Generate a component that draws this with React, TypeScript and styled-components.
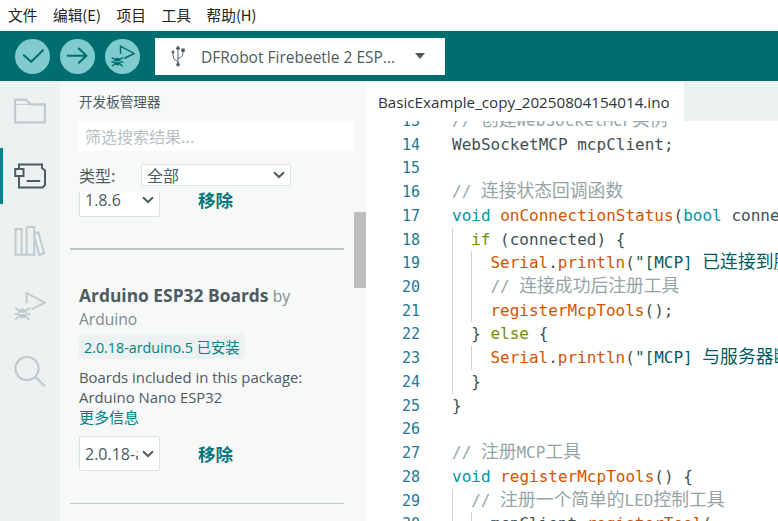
import React from "react";
import styled, { createGlobalStyle } from "styled-components";

const Global = createGlobalStyle`
  html, body { margin: 0; padding: 0; width: 778px; height: 521px; overflow: hidden; background: #fff; }
  * { box-sizing: border-box; }
`;

const Shell = styled.div`
  width: 778px;
  height: 521px;
  display: flex;
  flex-direction: column;
  overflow: hidden;
  font-family: "Open Sans", "Noto Sans CJK SC", sans-serif;
  color: #4e5b61;
`;

const MenuBar = styled.div`
  height: 31px;
  flex: none;
  display: flex;
  align-items: center;
  gap: 15.6px;
  padding: 0 0 2px 8px;
  background: #fff;
  font-family: "Noto Sans CJK SC", sans-serif;
  font-size: 14.7px;
  color: #222;
`;

const MenuItem = styled.span``;

const Toolbar = styled.div`
  height: 50px;
  flex: none;
  display: flex;
  align-items: center;
  gap: 10px;
  padding-left: 15px;
  background: #006d70;
`;

const RoundButton = styled.div`
  width: 35px;
  height: 35px;
  border-radius: 50%;
  background: #7fcbcd;
  display: flex;
  align-items: center;
  justify-content: center;
  flex: none;
`;

const BoardSelect = styled.div`
  width: 290px;
  height: 37px;
  margin-left: 5px;
  background: #fff;
  display: flex;
  align-items: center;
  padding-left: 15px;
  font-size: 15.5px;
  color: #4e5b61;
`;

const BoardName = styled.span`
  margin: 2px 0 0 15px;
  width: 214px;
  white-space: nowrap;
`;

const Caret = styled.span`
  width: 0;
  height: 0;
  border-left: 5px solid transparent;
  border-right: 5px solid transparent;
  border-top: 6px solid #4e5b61;
`;

const Body = styled.div`
  flex: 1;
  display: flex;
  min-height: 0;
`;

const ActivityBar = styled.div`
  width: 60px;
  flex: none;
  background: #ecf1f1;
  display: flex;
  flex-direction: column;
  gap: 9px;
  padding-top: 2px;
`;

const ActivityItem = styled.div<{ $active?: boolean }>`
  height: 56px;
  display: flex;
  align-items: center;
  justify-content: center;
  border-left: 3px solid ${(p) => (p.$active ? "#008184" : "transparent")};
  padding-right: 3px;
`;

const Panel = styled.div`
  width: 306px;
  flex: none;
  background: #f7f9f9;
  position: relative;
  overflow: hidden;
  display: flex;
  flex-direction: column;
`;

const PanelTitle = styled.div`
  height: 40px;
  flex: none;
  padding: 12px 0 0 19px;
  font-family: "Noto Sans CJK SC", sans-serif;
  font-size: 13.6px;
  line-height: 16px;
  color: #4e5b61;
`;

const Search = styled.div`
  height: 30px;
  margin: 0 12px 0 19px;
  flex: none;
  background: #fff;
  border-radius: 3px;
  padding-left: 6px;
  font-family: "Noto Sans CJK SC", sans-serif;
  font-size: 16px;
  line-height: 30px;
  color: #b8c0c2;
`;

const FilterRow = styled.div`
  height: 22px;
  margin-top: 13px;
  flex: none;
  display: flex;
  align-items: center;
  padding-left: 19px;
  font-family: "Noto Sans CJK SC", sans-serif;
  font-size: 16px;
  color: #4e5b61;
`;

const FilterLabel = styled.span`
  width: 62px;
  flex: none;
`;

const Dropdown = styled.div<{ $w: number; $h: number }>`
  width: ${(p) => p.$w}px;
  height: ${(p) => p.$h}px;
  background: #fff;
  border: 1px solid #dae3e3;
  border-radius: 2px;
  display: flex;
  align-items: center;
  justify-content: space-between;
  padding: 0 5px;
  font-size: 16px;
  color: #4e5b61;
  white-space: nowrap;
  overflow: hidden;
  flex: none;
`;

const DropText = styled.span<{ $clip?: number }>`
  overflow: hidden;
  width: ${(p) => (p.$clip ? `${p.$clip}px` : "auto")};
`;

const List = styled.div`
  flex: 1;
  overflow: hidden;
  margin-top: 6px;
  padding: 0 22px 0 10px;
  display: flex;
  flex-direction: column;
`;

const ActionRow = styled.div<{ $mt: number }>`
  display: flex;
  align-items: center;
  gap: 38px;
  margin-top: ${(p) => p.$mt}px;
  padding-left: 9px;
  flex: none;
`;

const Remove = styled.span`
  font-family: "Noto Sans CJK SC", sans-serif;
  font-weight: 700;
  font-size: 17.5px;
  color: #00787b;
`;

const Divider = styled.div<{ $t: number; $mt: number }>`
  height: ${(p) => p.$t}px;
  margin-top: ${(p) => p.$mt}px;
  background: #bdc7c7;
  flex: none;
`;

const Card = styled.div`
  padding: 33px 0 0 9px;
  flex: none;
`;

const CardTitle = styled.div`
  line-height: 24px;
  height: 24px;
  color: #4e5b61;
  white-space: nowrap;
`;

const Strong = styled.b`
  font-size: 17.4px;
  font-weight: 700;
`;

const Muted = styled.span`
  color: #7f8c8d;
  font-size: 15.6px;
`;

const Author = styled.div`
  font-size: 15.6px;
  line-height: 24px;
  color: #7f8c8d;
`;

const Badge = styled.div`
  display: inline-flex;
  align-items: center;
  height: 25px;
  margin-top: 3px;
  padding: 0 5px;
  border-radius: 4px;
  background: #ecf1f1;
  color: #008184;
  font-size: 14.3px;
  white-space: nowrap;
`;

const Desc = styled.div`
  margin-top: 8px;
  font-size: 14.9px;
  line-height: 20px;
  color: #4e5b61;
  white-space: nowrap;
`;

const MoreLink = styled.div`
  font-family: "Noto Sans CJK SC", sans-serif;
  font-size: 15px;
  line-height: 19px;
  color: #008184;
`;

const ScrollThumb = styled.div`
  position: absolute;
  right: 0;
  top: 131px;
  width: 12px;
  height: 76px;
  background: #bebebe;
`;

const Editor = styled.div`
  flex: 1;
  min-width: 0;
  display: flex;
  flex-direction: column;
  background: #fff;
  overflow: hidden;
`;

const TabBar = styled.div`
  height: 40px;
  flex: none;
  display: flex;
  background: #ecf1f1;
`;

const Tab = styled.div`
  width: 318px;
  background: #fff;
  padding: 11px 0 0 12px;
  font-size: 15.2px;
  line-height: 20px;
  color: #2c353a;
  white-space: nowrap;
  flex: none;
`;

const Code = styled.div`
  flex: 1;
  overflow: hidden;
  font-family: "DejaVu Sans Mono", monospace;
  font-size: 16px;
`;

const CodeInner = styled.div`
  margin-top: -12px;
`;

const Line = styled.div`
  height: 23.73px;
  line-height: 23.73px;
  display: flex;
  white-space: pre;
`;

const Gutter = styled.span`
  width: 86px;
  padding: 1px 32px 0 0;
  text-align: right;
  color: #237893;
  font-size: 15px;
  flex: none;
`;

const Source = styled.span`
  color: #434f54;
  display: flex;
`;

const Guide = styled.span`
  width: 19.2px;
  flex: none;
  border-left: 1px solid #d3d3d3;
`;

const C = styled.span<{ $k?: "c" | "k" | "f" | "g" | "s" }>`
  color: ${(p) =>
    p.$k === "c" ? "#95a5a6" : p.$k === "k" ? "#00979c" : p.$k === "f" ? "#d35400" : p.$k === "g" ? "#728e00" : p.$k === "s" ? "#005c5f" : "#434f54"};
`;

const Han = styled.span`
  font-family: "Noto Sans CJK SC", sans-serif;
  font-size: 17.8px;
  line-height: 0;
`;

const Mini = styled.svg`
  display: block;
`;

const lines: [number, React.ReactNode][] = [
  [0, <C $k="c">// <Han>创建</Han>WebSocketMCP<Han>实例</Han></C>],
  [0, <C>WebSocketMCP mcpClient;</C>],
  [0, null],
  [0, <C $k="c">// <Han>连接状态回调函数</Han></C>],
  [0, <><C $k="k">void</C> <C $k="f">onConnectionStatus</C><C>(</C><C $k="k">bool</C> <C>connected) {"{"}</C></>],
  [1, <><C $k="g">if</C> <C>(connected) {"{"}</C></>],
  [2, <><C $k="f">Serial</C><C>.</C><C $k="f">println</C><C>(</C><C $k="s">"[MCP] <Han>已连接到服务器</Han>"</C></>],
  [2, <C $k="c">// <Han>连接成功后注册工具</Han></C>],
  [2, <><C $k="f">registerMcpTools</C><C>();</C></>],
  [1, <><C>{"}"} </C><C $k="g">else</C> <C>{"{"}</C></>],
  [2, <><C $k="f">Serial</C><C>.</C><C $k="f">println</C><C>(</C><C $k="s">"[MCP] <Han>与服务器断开</Han>"</C></>],
  [1, <C>{"}"}</C>],
  [0, <C>{"}"}</C>],
  [0, null],
  [0, <C $k="c">// <Han>注册</Han>MCP<Han>工具</Han></C>],
  [0, <><C $k="k">void</C> <C $k="f">registerMcpTools</C><C>() {"{"}</C></>],
  [1, <C $k="c">// <Han>注册一个简单的</Han>LED<Han>控制工具</Han></C>],
  [2, <><C>mcpClient.</C><C $k="f">registerTool</C><C>(</C></>],
];

const Check = () => (
  <Mini width="24" height="24" viewBox="0 0 24 24" fill="none" stroke="#006d70" strokeWidth="2" strokeLinecap="round" strokeLinejoin="round">
    <path d="M2.8 11.2 L10.2 17.8 L22 6.2" />
  </Mini>
);
const ArrowIcon = () => (
  <Mini width="24" height="24" viewBox="0 0 24 24" fill="none" stroke="#006d70" strokeWidth="2" strokeLinecap="round" strokeLinejoin="round">
    <path d="M1.8 11.7 H20.5 M12.8 4.5 L20.5 11.7 L12.8 18.8" />
  </Mini>
);
const DebugIcon = ({ c, w = 24, bg }: { c: string; w?: number; bg: string }) => (
  <Mini width={w} height={w} viewBox="0 0 24 24" fill="none" stroke={c} strokeWidth="1.4" strokeLinejoin="miter" strokeLinecap="butt">
    <path d="M9.5 10 V2.2 L23.2 9.5 L13 14.5" />
    <ellipse cx="6.3" cy="17.6" rx="3.4" ry="3.8" fill={c} stroke="none" />
    <path d="M2.9 17.6 H9.7" stroke={bg} strokeWidth="0.8" />
    <path d="M0.8 13.6 L3.6 15.3 M11.8 13.6 L9 15.3 M0.4 18 H3 M12.2 18 H9.6 M1 22.3 L3.6 20 M11.6 22.3 L9 20" />
  </Mini>
);
const Usb = () => (
  <Mini width="16" height="22" viewBox="0 0 16 22" fill="none" stroke="#4e5b61" strokeWidth="1">
    <path d="M8 2 V20 M8 16.5 C3.5 15 3 12 3 8 M8 13.5 C12.5 12 13 10 13 6" />
    <path d="M8 1 L9.8 4 H6.2 Z" fill="#4e5b61" />
    <circle cx="8" cy="19.6" r="1.4" fill="#4e5b61" />
    <circle cx="3" cy="7" r="1.1" fill="#4e5b61" />
    <rect x="11.8" y="4" width="2.4" height="2.4" fill="#4e5b61" />
  </Mini>
);
const Folder = () => (
  <Mini width="32" height="26" viewBox="0 0 32 26" fill="none" stroke="#c1cbcb" strokeWidth="2.2">
    <path d="M1.1 24.4 V1.6 H12 L16.5 6.4 H30.9 V24.4 Z" />
    <path d="M1.1 6.4 H16.5" strokeWidth="1" />
  </Mini>
);
const Board = () => (
  <Mini width="32" height="26" viewBox="0 0 32 26" fill="none" stroke="#4e5b61" strokeWidth="2" strokeLinejoin="miter">
    <path d="M5 6 V1.5 H28 V5 L31 7.5 V22 L28.5 24.5 H5 V13" />
    <rect x="1.2" y="6" width="8.3" height="7" />
    <path d="M12.7 18 H26.2" />
  </Mini>
);
const Library = () => (
  <Mini width="32" height="32" viewBox="0 0 32 32" fill="none" stroke="#c1cbcb" strokeWidth="2" strokeLinejoin="miter">
    <path d="M1.6 4 H7.6 V29.8 H1.6 Z M12.6 2 H20.3 V29.8 H7.6 M12.6 2 V29.8 M20.3 8.3 L24.3 7.3 L30.3 28.3 L25.3 30 L20.3 12" />
  </Mini>
);
const Search2 = () => (
  <Mini width="32" height="32" viewBox="0 0 32 32" fill="none" stroke="#c1cbcb" strokeWidth="2.2" strokeLinecap="round">
    <circle cx="13" cy="13.6" r="11.6" />
    <path d="M21.5 22 L30.3 30.6" />
  </Mini>
);
const Chevron = () => (
  <Mini width="12" height="8" viewBox="0 0 12 8" fill="none" stroke="#4e5b61" strokeWidth="2">
    <path d="M1 1.2 L6 6 L11 1.2" />
  </Mini>
);

export default function App() {
  return (
    <Shell>
      <Global />
      <MenuBar>
        <MenuItem>文件</MenuItem>
        <MenuItem>编辑(E)</MenuItem>
        <MenuItem>项目</MenuItem>
        <MenuItem>工具</MenuItem>
        <MenuItem>帮助(H)</MenuItem>
      </MenuBar>
      <Toolbar>
        <RoundButton><Check /></RoundButton>
        <RoundButton><ArrowIcon /></RoundButton>
        <RoundButton><DebugIcon c="#006d70" bg="#7fcbcd" /></RoundButton>
        <BoardSelect>
          <Usb />
          <BoardName>DFRobot Firebeetle 2 ESP...</BoardName>
          <Caret />
        </BoardSelect>
      </Toolbar>
      <Body>
        <ActivityBar>
          <ActivityItem><Folder /></ActivityItem>
          <ActivityItem $active><Board /></ActivityItem>
          <ActivityItem><Library /></ActivityItem>
          <ActivityItem><DebugIcon c="#c1cbcb" bg="#ecf1f1" w={32} /></ActivityItem>
          <ActivityItem><Search2 /></ActivityItem>
        </ActivityBar>
        <Panel>
          <PanelTitle>开发板管理器</PanelTitle>
          <Search>筛选搜索结果...</Search>
          <FilterRow>
            <FilterLabel>类型:</FilterLabel>
            <Dropdown $w={150} $h={22}>
              <span>全部</span>
              <Chevron />
            </Dropdown>
          </FilterRow>
          <List>
            <ActionRow $mt={-10}>
              <Dropdown $w={81} $h={35}>
                <span>1.8.6</span>
                <Chevron />
              </Dropdown>
              <Remove>移除</Remove>
            </ActionRow>
            <Divider $t={2} $mt={31} />
            <Card>
              <CardTitle><Strong>Arduino ESP32 Boards</Strong> <Muted>by</Muted></CardTitle>
              <Author>Arduino</Author>
              <Badge>2.0.18-arduino.5 已安装</Badge>
              <Desc>Boards included in this package:<br />Arduino Nano ESP32</Desc>
              <MoreLink>更多信息</MoreLink>
            </Card>
            <ActionRow $mt={10}>
              <Dropdown $w={81} $h={35}>
                <DropText $clip={53}>2.0.18-arduino.5</DropText>
                <Chevron />
              </Dropdown>
              <Remove>移除</Remove>
            </ActionRow>
            <Divider $t={1} $mt={32} />
          </List>
          <ScrollThumb />
        </Panel>
        <Editor>
          <TabBar>
            <Tab>BasicExample_copy_20250804154014.ino</Tab>
          </TabBar>
          <Code>
            <CodeInner>
              {lines.map((l, i) => (
                <Line key={i}>
                  <Gutter>{13 + i}</Gutter>
                  <Source>
                    {Array.from({ length: l[0] }).map((_, j) => <Guide key={j} />)}
                    <span>{l[1]}</span>
                  </Source>
                </Line>
              ))}
            </CodeInner>
          </Code>
        </Editor>
      </Body>
    </Shell>
  );
}
